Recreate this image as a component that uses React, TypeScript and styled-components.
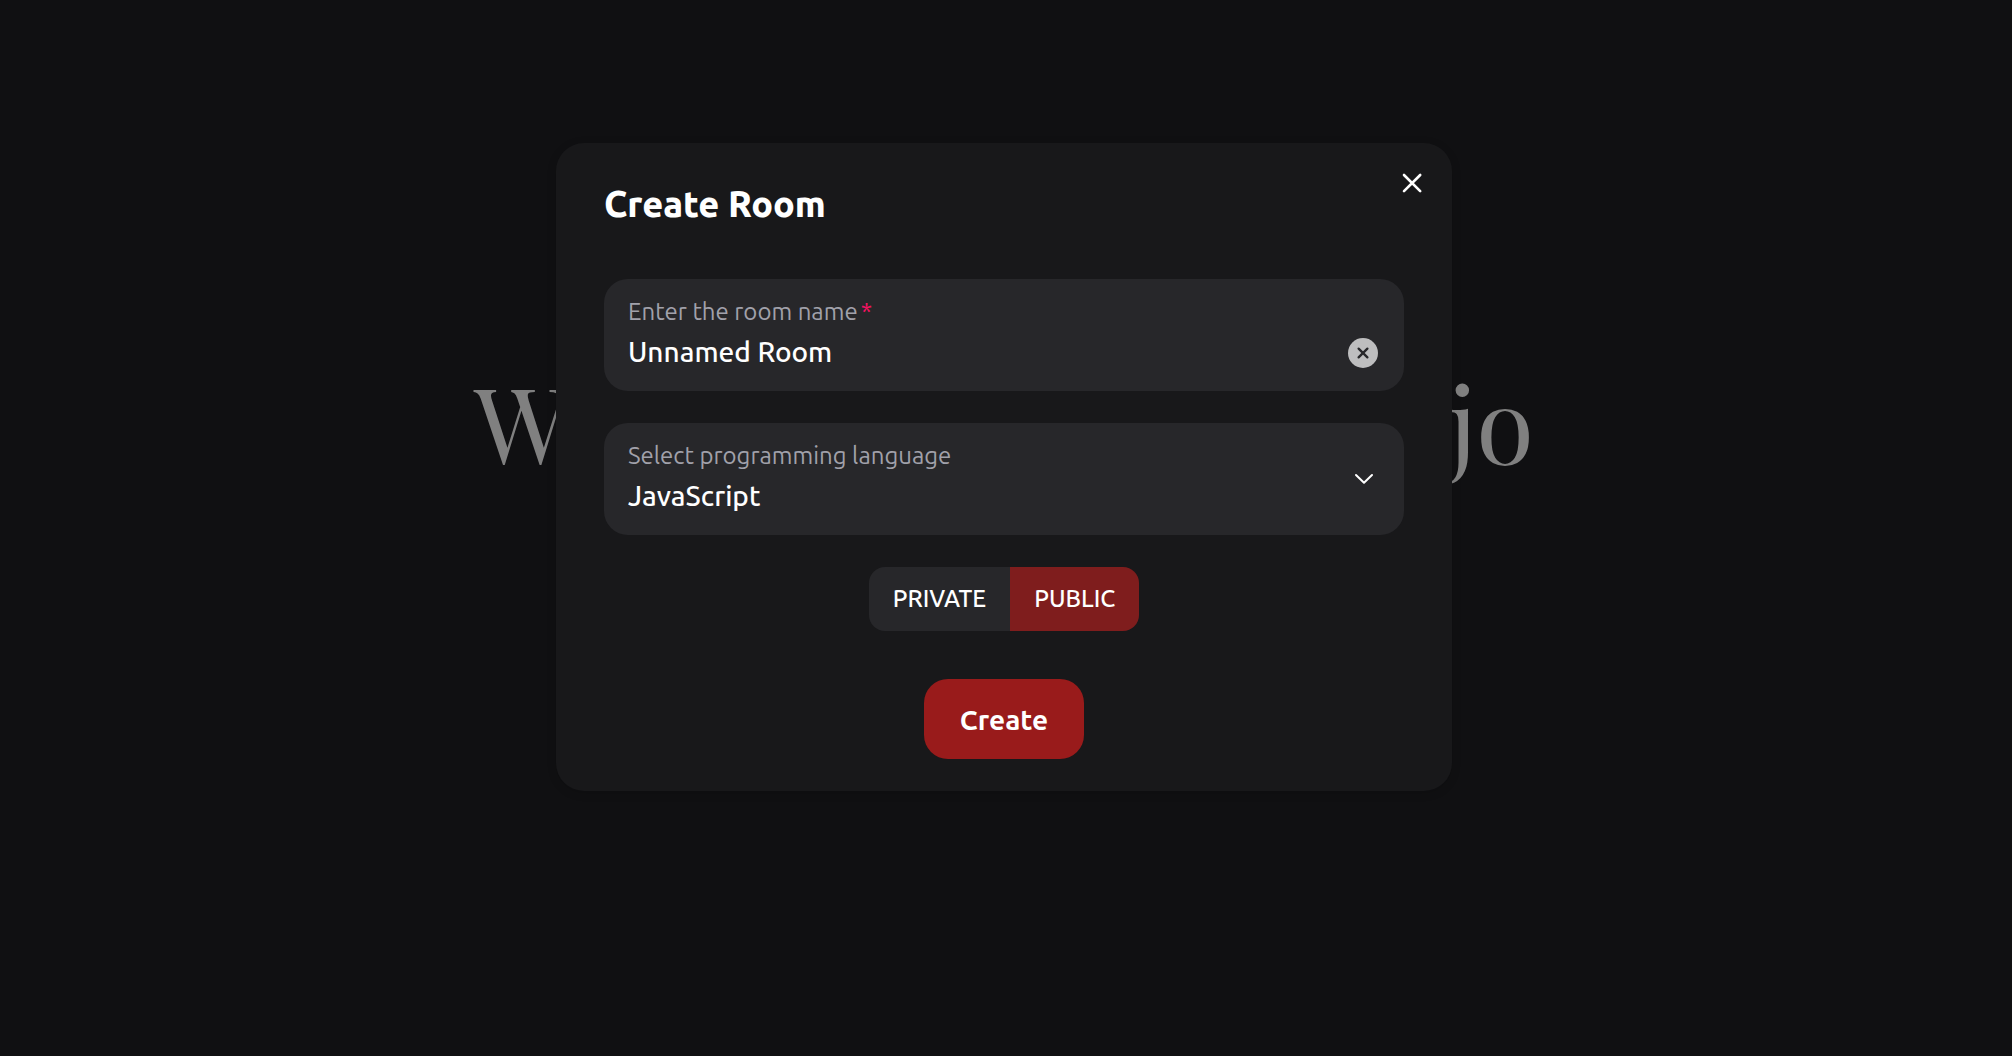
import React, { useState } from "react";
import styled, { createGlobalStyle } from "styled-components";

const GlobalStyle = createGlobalStyle`
  *, *::before, *::after { box-sizing: border-box; }
  body {
    margin: 0;
    background: #101012;
    color: #ffffff;
    font-family: Ubuntu, "Noto Sans", "Open Sans", sans-serif;
  }
  button, input, select { font: inherit; color: inherit; }
`;

const Page = styled.div`
  display: grid;
  min-height: 100vh;
  padding-right: 4px;
  background: #101012;
`;

const Hero = styled.main`
  grid-area: 1 / 1;
  padding-top: 361px;
  text-align: center;
`;

const HeroTitle = styled.h1`
  margin: 0;
  color: #808080;
  font-family: "Playfair Display", "Liberation Serif", serif;
  font-size: 105px;
  font-weight: 400;
  line-height: 120px;
  white-space: nowrap;
`;

const Overlay = styled.div`
  grid-area: 1 / 1;
  z-index: 1;
  display: flex;
  justify-content: center;
  align-items: flex-start;
  padding: 143px 24px;
`;

const Dialog = styled.section`
  position: relative;
  width: 100%;
  max-width: 896px;
  border-radius: 28px;
  background: #18181a;
  box-shadow: 0 2px 10px rgba(0, 0, 0, 0.15);
`;

const CloseButton = styled.button`
  position: absolute;
  top: 12px;
  right: 12px;
  display: flex;
  padding: 12px;
  border: 0;
  border-radius: 50%;
  background: transparent;
`;

const DialogTitle = styled.h2`
  margin: 0;
  padding: 37px 48px 19px;
  font-size: 36px;
  font-weight: 800;
  line-height: 48px;
`;

const Form = styled.form`
  display: flex;
  flex-direction: column;
  align-items: center;
  gap: 32px;
  padding: 32px 48px;
`;

const Field = styled.div`
  display: grid;
  grid-template-columns: 1fr auto;
  grid-template-rows: 40px 40px;
  align-items: center;
  width: 100%;
  padding: 12px 24px 20px;
  border-radius: 24px;
  background: #27272a;
`;

const Label = styled.label`
  grid-column: 1;
  padding-top: 2px;
  color: #a1a1aa;
  font-size: 24px;
  line-height: 36px;
`;

const Required = styled.span`
  margin-left: 3px;
  color: #f31260;
`;

const TextInput = styled.input`
  grid-column: 1;
  width: 100%;
  height: 40px;
  padding: 0;
  border: 0;
  outline: 0;
  background: transparent;
  font-size: 28px;
  font-weight: 500;
`;

const Select = styled.select`
  grid-column: 1;
  width: 100%;
  height: 40px;
  padding: 0;
  border: 0;
  outline: 0;
  appearance: none;
  background: transparent;
  font-size: 28px;
  font-weight: 500;
`;

const ClearButton = styled.button`
  grid-column: 2;
  display: flex;
  padding: 4px 2px 0 0;
  border: 0;
  background: transparent;
`;

const SelectArrow = styled.span`
  grid-column: 2;
  grid-row: 1 / 3;
  display: flex;
  padding: 8px 6px 0 0;
`;

const Visibility = styled.div`
  display: flex;
  overflow: hidden;
  border-radius: 16px;
`;

const VisibilityButton = styled.button<{ $active: boolean }>`
  height: 64px;
  padding: 0 24px 2px;
  border: 0;
  background: ${({ $active }) => ($active ? "#7f1d1d" : "#27272a")};
  font-size: 24px;
  font-weight: 500;
`;

const SubmitButton = styled.button`
  height: 80px;
  min-width: 160px;
  margin-top: 16px;
  padding: 0 32px;
  border: 0;
  border-radius: 24px;
  background: #991b1b;
  font-size: 28px;
  font-weight: 600;
`;

const CloseIcon = () => (
  <svg width="32" height="32" viewBox="0 0 32 32" fill="none" stroke="#ffffff" strokeWidth="2.6" strokeLinecap="round" aria-hidden="true">
    <path d="M8 8 24.2 24.2M24.2 8 8 24.2" />
  </svg>
);

const ClearIcon = () => (
  <svg width="30" height="30" viewBox="0 0 30 30" aria-hidden="true">
    <circle cx="15" cy="15" r="15" fill="#bebebf" />
    <path d="M10.6 10.6 19.4 19.4M19.4 10.6 10.6 19.4" stroke="#27272a" strokeWidth="2.3" strokeLinecap="round" />
  </svg>
);

const ChevronIcon = () => (
  <svg width="20" height="12" viewBox="0 0 20 12" fill="none" stroke="#ffffff" strokeWidth="2" strokeLinecap="round" strokeLinejoin="round" aria-hidden="true">
    <path d="M2 2 10 9.8 18 2" />
  </svg>
);

export default function App() {
  const [name, setName] = useState("Unnamed Room");
  const [isPublic, setIsPublic] = useState(true);

  return (
    <>
      <GlobalStyle />
      <Page>
        <Hero>
          <HeroTitle>Welcome to Code Dojo</HeroTitle>
        </Hero>
        <Overlay>
          <Dialog role="dialog" aria-modal="true" aria-labelledby="dialog-title">
            <DialogTitle id="dialog-title">Create Room</DialogTitle>
            <CloseButton type="button" aria-label="Close">
              <CloseIcon />
            </CloseButton>
            <Form onSubmit={(event) => event.preventDefault()}>
              <Field>
                <Label htmlFor="room-name">
                  Enter the room name
                  <Required>*</Required>
                </Label>
                <TextInput id="room-name" required value={name} onChange={(event) => setName(event.target.value)} />
                <ClearButton type="button" aria-label="Clear room name" onClick={() => setName("")}>
                  <ClearIcon />
                </ClearButton>
              </Field>
              <Field>
                <Label htmlFor="language">Select programming language</Label>
                <Select id="language" defaultValue="JavaScript">
                  <option>JavaScript</option>
                </Select>
                <SelectArrow>
                  <ChevronIcon />
                </SelectArrow>
              </Field>
              <Visibility role="group" aria-label="Room visibility">
                <VisibilityButton type="button" $active={!isPublic} aria-pressed={!isPublic} onClick={() => setIsPublic(false)}>
                  PRIVATE
                </VisibilityButton>
                <VisibilityButton type="button" $active={isPublic} aria-pressed={isPublic} onClick={() => setIsPublic(true)}>
                  PUBLIC
                </VisibilityButton>
              </Visibility>
              <SubmitButton type="submit">Create</SubmitButton>
            </Form>
          </Dialog>
        </Overlay>
      </Page>
    </>
  );
}
